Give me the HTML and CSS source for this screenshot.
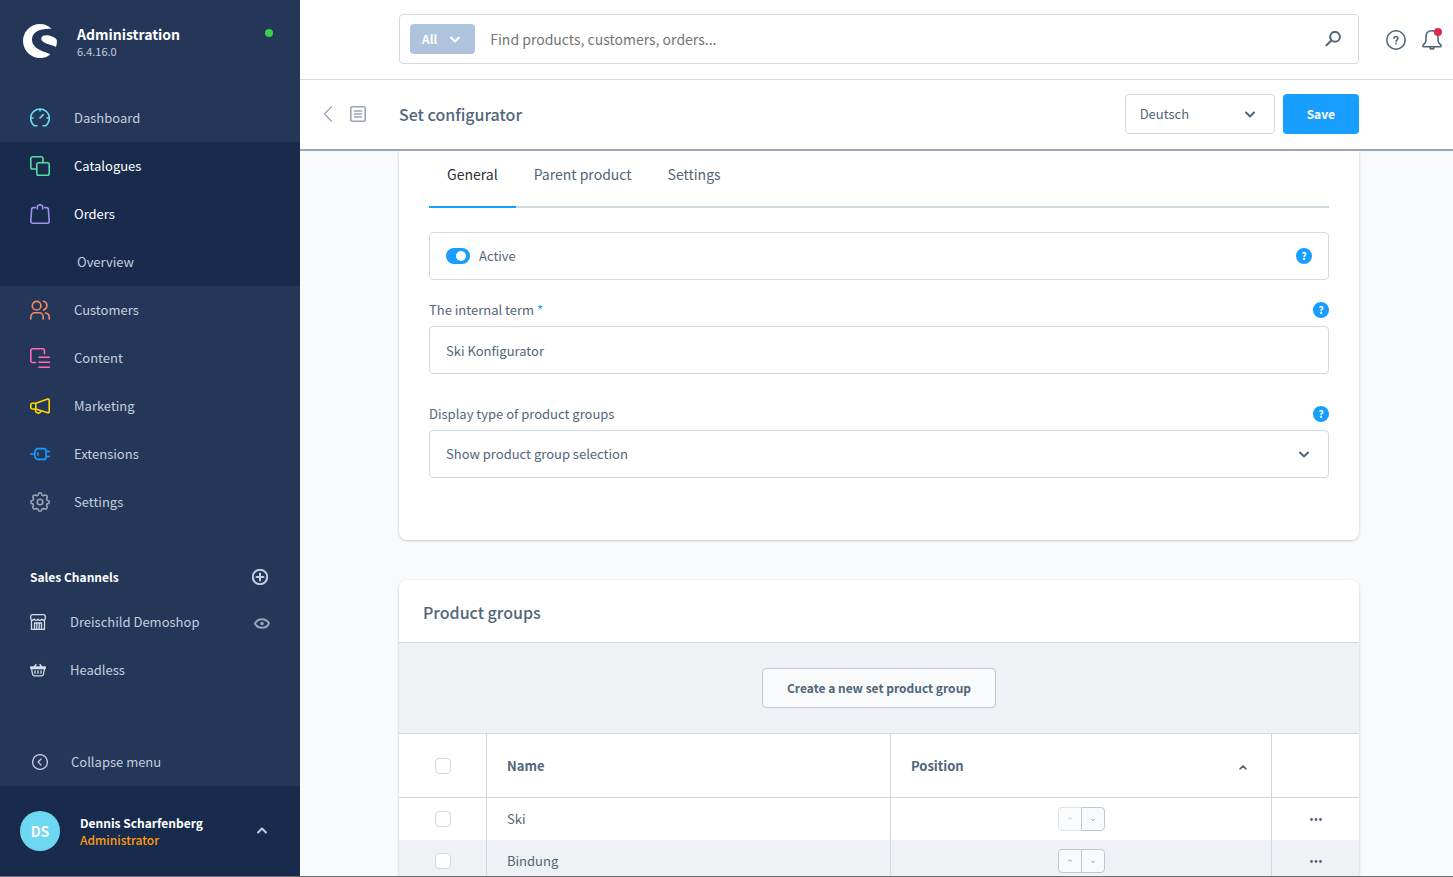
FILE: index.html
```html
<!DOCTYPE html>
<html lang="en">
<head>
<meta charset="utf-8">
<title>Set configurator | Administration</title>
<link rel="stylesheet" href="styles.css">
</head>
<body>
<div class="app">
  <aside class="sidebar">
    <header class="brand">
      <svg class="brand-logo" viewBox="0 0 34 34" aria-hidden="true"><path d="M28.500 4.800C25.500 1.800 21.500 0 17 0a17 17 0 0 0 0 34c4 0 7.500-1.300 10.200-3.600C23 27.500 9 26 9 15.500 9 8 17 4.200 28.500 4.800z"/><path d="M18.200 14.500c0-3 4-4 8-3 4.100 1 7 3 7.600 4.500.3 2.400 0 4.800-.8 7C28.500 20.500 18.200 19.500 18.200 14.500z"/></svg>
      <div class="brand-text">
        <strong class="brand-name">Administration</strong>
        <span class="brand-version">6.4.16.0</span>
      </div>
      <span class="status-dot"></span>
    </header>

    <nav class="menu" aria-label="Main">
      <a class="menu-item" href="#"><svg class="icon cyan" viewBox="0 0 20 20"><path d="M6.800 17.800H4.600a9.300 9.300 0 1 1 10.800 0h-2.200M10 .8v2.200M.8 10H3M17 10h2.200M10 10l3.200-3.400"/></svg>Dashboard</a>
      <div class="menu-open">
        <a class="menu-item active" href="#"><svg class="icon green" viewBox="0 0 20 20"><path d="M6.500 13H2.600A1.800 1.800 0 0 1 .8 11.200V2.600A1.800 1.800 0 0 1 2.600.8h8.600A1.800 1.800 0 0 1 13 2.600v4.200"/><rect x="6.800" y="6.800" width="12.400" height="12.400" rx="1.800"/></svg>Catalogues</a>
        <a class="menu-item active" href="#"><svg class="icon purple" viewBox="0 0 20 20"><path d="M5.200 3.600H3.600A2 2 0 0 0 1.600 5.500L.8 17.200a2 2 0 0 0 2 2h14.400a2 2 0 0 0 2-2l-.8-11.700a2 2 0 0 0-2-1.900h-1.600M7.300 5V3.200c0-3.200 5.400-3.200 5.400 0V5"/></svg>Orders</a>
        <a class="menu-item sub" href="#">Overview</a>
      </div>
      <a class="menu-item" href="#"><svg class="icon coral" viewBox="0 0 20 20"><circle cx="6.600" cy="5.700" r="4.300"/><path d="M.8 19v-2.200a4 4 0 0 1 4-4h4.400a4 4 0 0 1 4 4V19M13.500 1.300c4.500 1 4.500 7.400 0 8.600M15.500 13c2.300.4 3.700 2 3.700 4v2"/></svg>Customers</a>
      <a class="menu-item" href="#"><svg class="icon pink" viewBox="0 0 20 20"><path d="M5.500 14.500H2.600A1.800 1.800 0 0 1 .8 12.700V2.600A1.800 1.800 0 0 1 2.600.8h10A1.800 1.800 0 0 1 14.400 2.600v3M9 9.200h11M9 14.200h11M9 19.200h11"/></svg>Content</a>
      <a class="menu-item" href="#"><svg class="icon yellow" viewBox="0 0 20 20"><path d="M5.800 7.200L17.800 3Q19.200 2.700 19.200 4v11.800q0 1.300-1.400 1L5.800 13H2.400Q.8 13 .8 11.600V8.600Q.8 7.200 2.400 7.200zM5.800 7.200V13M5.600 13c-1.200 4.500 4.400 5.500 5.400 1.800"/></svg>Marketing</a>
      <a class="menu-item" href="#"><svg class="icon blue" viewBox="0 0 20 20"><path d="M0 10h4.800M16 7.500h4M16 12.500h4M8 8.800v2.400M7.500 4.600h6.500q2 0 2 2v6.800q0 2-2 2H7.500Q4.800 14.400 4.800 11.500v-3Q4.800 5.600 7.500 4.600z"/></svg>Extensions</a>
      <a class="menu-item" href="#"><svg class="icon slate" viewBox="0 0 20 20"><circle cx="10" cy="10" r="2.800"/><path d="M8.300 2.400Q8.500.8 10 .8t1.700 1.600l.3.900 1.300.5.900-.5q1.400-.7 2.400.3t.3 2.400l-.4 1 .5 1.200 1 .3q1.300.2 1.300 1.500t-1.300 1.600l-1 .4-.5 1.200.4.900q.7 1.400-.3 2.400t-2.400.3l-.9-.4-1.300.5-.3.900q-.3 1.400-1.700 1.400t-1.700-1.400l-.3-.9-1.300-.5-.9.400q-1.400.7-2.400-.3t-.3-2.400l.4-.9-.5-1.200-1-.4Q.8 11.500.8 10t1.300-1.500l1-.3.5-1.200-.4-1q-.7-1.400.3-2.400t2.400-.3l.9.500L8 3.300z"/></svg>Settings</a>
    </nav>

    <section class="channels">
      <div class="channels-head"><h2 class="channels-title">Sales Channels</h2>
        <button class="icon-btn" type="button" aria-label="Add sales channel"><svg class="icon-s bold" viewBox="0 0 16 16"><circle cx="8" cy="8" r="7.200"/><path d="M8 4.500v7M4.500 8h7"/></svg></button></div>
      <a class="channel" href="#"><svg class="icon-s light" viewBox="0 0 16 16"><path d="M1.500 6.500v9h13v-9M.7 4.500V2.500Q.7.700 2.500.7h11q1.800 0 1.800 1.800v2c-.2 2.200-2.600 2.200-3.600.6-1 1.600-2.700 1.600-3.700 0-1 1.600-2.700 1.600-3.700 0-1 1.600-3.400 1.600-3.600-.6zM4.500 15.500V9h7v6.500M6.800 9v6.500M9.200 9v6.500"/></svg><span class="channel-name">Dreischild Demoshop</span><svg class="icon-s eye" viewBox="0 0 16 16"><path d="M1 9.500c2.800-5.700 11.200-5.700 14 0-2.800 5.700-11.200 5.700-14 0z"/><circle cx="8" cy="9.500" r=".8"/></svg></a>
      <a class="channel" href="#"><svg class="icon-s light" viewBox="0 0 16 16"><path d="M.7 5h14.600v1.500H.7zM1.500 6.500l1 5.500q.2 1.800 1.800 1.800h7.400q1.600 0 1.800-1.800l1-5.500M4.500 4.500L6 2.500M11.500 4.500L10 2.500M5 8.800v2.500M8 8.800v2.500M11 8.800v2.500"/></svg><span class="channel-name">Headless</span></a>
    </section>

    <button class="collapse" type="button"><svg class="icon-s" viewBox="0 0 16 16"><circle cx="8" cy="8" r="7.400"/><path d="M9 5L6.200 8 9 11"/></svg>Collapse menu</button>

    <button class="user" type="button">
      <span class="avatar">DS</span>
      <span class="user-text"><span class="user-name">Dennis Scharfenberg</span><span class="user-role">Administrator</span></span>
      <svg class="chevron" viewBox="0 0 12 12"><path d="M2 7.500l4-4 4 4"/></svg>
    </button>
  </aside>

  <div class="desk">
    <header class="topbar">
      <form class="search">
        <button class="search-scope" type="button">All<svg class="chevron" viewBox="0 0 12 12"><path d="M2 4.500l4 4 4-4"/></svg></button>
        <input class="search-input" type="text" aria-label="Search" placeholder="Find products, customers, orders...">
        <button class="icon-btn" type="button" aria-label="Search"><svg class="icon-s bold" viewBox="0 0 16 16"><circle cx="10" cy="5.800" r="4.900"/><path d="M6.500 9.300L1.500 14.300"/></svg></button>
      </form>
      <div class="topbar-actions">
        <button class="icon-btn" type="button" aria-label="Help"><svg class="icon" viewBox="0 0 20 20"><circle cx="10" cy="10" r="9.200"/><path d="M8 8.300c0-2.500 4-2.500 4 0 0 1.400-2 1.600-2 3.200M10 13.300v.4"/></svg></button>
        <button class="icon-btn bell" type="button" aria-label="Notifications"><svg class="icon" viewBox="0 0 20 20"><path d="M10 .8C6 .8 4 3.600 4 7v3.500c0 3-3.200 3.800-3.200 5.200q0 1.100 1.200 1.100h16q1.200 0 1.200-1.100c0-1.400-3.200-2.200-3.200-5.200V7C16 3.600 14 .8 10 .8zM8 17.200c0 2.400 4 2.400 4 0"/></svg><span class="bell-dot"></span></button>
      </div>
    </header>

    <header class="pagebar">
      <div class="pagebar-nav">
        <button class="icon-btn" type="button" aria-label="Back"><svg class="icon-s" viewBox="0 0 16 16"><path d="M11.500.8L4.500 8l7 7.200"/></svg></button>
        <button class="icon-btn" type="button" aria-label="List"><svg class="icon-s list" viewBox="0 0 16 16"><rect x=".8" y=".8" width="14.400" height="14.400" rx="1.500"/><path d="M4.500 5h7M4.500 8h7M4.500 11h7"/></svg></button>
      </div>
      <div class="pagebar-main">
        <h1 class="page-title">Set configurator</h1>
        <div class="select language"><select class="control" aria-label="Language"><option>Deutsch</option></select><svg class="chevron" viewBox="0 0 12 12"><path d="M2 4.500l4 4 4-4"/></svg></div>
        <button class="save" type="button">Save</button>
      </div>
    </header>

    <main class="content">
      <section class="card general">
        <nav class="tabs"><a class="tab current" href="#">General</a><a class="tab" href="#">Parent product</a><a class="tab" href="#">Settings</a></nav>
        <div class="switch-row">
          <label class="switch-label"><input class="switch" type="checkbox" checked>Active</label>
          <button class="help" type="button" aria-label="Help: Active">?</button>
        </div>
        <div class="field">
          <div class="field-head"><label for="term">The internal term <span class="required">*</span></label><button class="help" type="button" aria-label="Help: The internal term">?</button></div>
          <input class="control" id="term" type="text" value="Ski Konfigurator">
        </div>
        <div class="field">
          <div class="field-head"><label for="display">Display type of product groups</label><button class="help" type="button" aria-label="Help: Display type">?</button></div>
          <div class="select"><select class="control" id="display"><option>Show product group selection</option></select><svg class="chevron" viewBox="0 0 12 12"><path d="M2 4.500l4 4 4-4"/></svg></div>
        </div>
      </section>

      <section class="card groups">
        <h2 class="card-title">Product groups</h2>
        <div class="card-tools"><button class="create" type="button">Create a new set product group</button></div>
        <table class="grid">
          <colgroup><col class="col-check"><col class="col-name"><col class="col-pos"><col class="col-menu"></colgroup>
          <thead>
            <tr><th><input class="check" type="checkbox" aria-label="Select all"></th><th>Name</th><th><span class="sort">Position<svg class="chevron small" viewBox="0 0 12 12"><path d="M2.500 9.500l3.500-3.500 3.500 3.500"/></svg></span></th><th></th></tr>
          </thead>
          <tbody>
            <tr>
              <td><input class="check" type="checkbox" aria-label="Select Ski"></td><td>Ski</td>
              <td><span class="mover"><button class="move" type="button" disabled aria-label="Move up"><svg viewBox="0 0 4 4"><path d="M.5 2L2 1l1.500 1"/></svg></button><button class="move" type="button" aria-label="Move down"><svg viewBox="0 0 4 4"><path d="M.5 2.500L2 3.500l1.500-1"/></svg></button></span></td>
              <td><button class="icon-btn more" type="button" aria-label="Actions"><svg viewBox="0 0 12 4"><circle cx="1.500" cy="2.500" r="1.400"/><circle cx="6" cy="2.500" r="1.400"/><circle cx="10.500" cy="2.500" r="1.400"/></svg></button></td>
            </tr>
            <tr>
              <td><input class="check" type="checkbox" aria-label="Select Bindung"></td><td>Bindung</td>
              <td><span class="mover"><button class="move" type="button" aria-label="Move up"><svg viewBox="0 0 4 4"><path d="M.5 2L2 1l1.500 1"/></svg></button><button class="move" type="button" aria-label="Move down"><svg viewBox="0 0 4 4"><path d="M.5 2.500L2 3.500l1.500-1"/></svg></button></span></td>
              <td><button class="icon-btn more" type="button" aria-label="Actions"><svg viewBox="0 0 12 4"><circle cx="1.500" cy="2.500" r="1.400"/><circle cx="6" cy="2.500" r="1.400"/><circle cx="10.500" cy="2.500" r="1.400"/></svg></button></td>
            </tr>
          </tbody>
        </table>
      </section>
    </main>
  </div>
</div>
</body>
</html>
```
FILE: styles.css
```css
:root {
  --text: #52667a;
  --line: #d1d9e0;
  --blue: #189eff;
  --navy: #243758;
  --navy-dark: #182b4c;
  --pale: #c3cfdf;
}

*, *::before, *::after { box-sizing: border-box; }

body {
  margin: 0;
  color: var(--text);
  background: #f9fafc;
  font-family: "Source Sans Pro", "Noto Sans CJK SC", "Noto Sans", sans-serif;
  font-size: 13px;
  line-height: 20px;
}

button, input, select { font: inherit; color: inherit; }
button { cursor: pointer; }
a { color: inherit; text-decoration: none; }
h1, h2 { margin: 0; }
svg { display: block; flex: none; fill: none; stroke: currentColor; stroke-linecap: round; stroke-linejoin: round; }

.app {
  display: grid;
  grid-template-columns: 300px minmax(0, 1fr);
  height: 100vh;
  overflow: hidden;
  border-bottom: 1px solid #6f6f73;
}

.icon { width: 20px; height: 20px; stroke-width: 1.6; }
.icon-s { width: 16px; height: 16px; stroke-width: 1.3; }
.bold { stroke-width: 2; }
.list { stroke-width: 1.6; }
.chevron { width: 12px; height: 12px; stroke-width: 2; }
.icon-btn { display: flex; padding: 0; border: 0; background: none; }

/* Sidebar */
.sidebar { display: flex; flex-direction: column; min-height: 0; color: var(--pale); background: var(--navy); }
.brand { display: flex; align-items: flex-start; padding: 24px 27px 36px 23px; }
.brand-logo { width: 34px; height: 34px; fill: #fff; stroke: none; }
.brand-text { display: flex; flex-direction: column; flex: 1; padding-left: 20px; }
.brand-name { color: #fff; font-size: 14px; line-height: 20px; }
.brand-version { font-size: 11px; line-height: 14px; }
.status-dot { width: 8px; height: 8px; margin-top: 5px; border-radius: 50%; background: #37d046; }

.menu-item { display: flex; align-items: center; gap: 24px; height: 48px; padding-left: 30px; }
.menu-open { background: var(--navy-dark); }
.menu-item.active { color: #fff; }
.menu-item.sub { padding-left: 77px; }
.cyan { color: #6ed8f2; }
.green { color: #57d9a3; }
.purple { color: #a092f0; }
.coral { color: #f88962; }
.pink { color: #ff68b4; }
.yellow { color: #ffd700; }
.blue { color: var(--blue); }
.slate { color: #98a7b8; }

.channels { padding-top: 36px; }
.channels-head { display: flex; align-items: center; justify-content: space-between; height: 30px; margin-bottom: 6px; padding: 0 32px 0 30px; }
.channels-title { color: #fff; font-size: 12px; line-height: 20px; }
.channel { display: flex; align-items: center; gap: 24px; height: 48px; padding: 0 30px; }
.channel-name { flex: 1; }
.light { color: #d5deea; }
.eye { color: #98a7b8; stroke-width: 2; }

.collapse { display: flex; align-items: center; gap: 23px; height: 48px; margin-top: auto; padding: 0 32px; border: 0; background: none; }
.user { display: flex; align-items: center; gap: 20px; height: 90px; padding: 0 32px 0 20px; border: 0; background: var(--navy-dark); text-align: left; }
.avatar { width: 40px; height: 40px; border-radius: 50%; background: #6ed8f2; color: #fff; font-size: 14px; font-weight: 700; line-height: 40px; text-align: center; }
.user-text { display: flex; flex: 1; flex-direction: column; font-size: 12px; line-height: 17px; }
.user-name { color: #fff; font-weight: 700; }
.user-role { color: #ff9a12; font-weight: 500; }

/* Header bars */
.desk { display: flex; flex-direction: column; min-width: 0; min-height: 0; }
.topbar, .pagebar { display: grid; grid-template-columns: 99px minmax(0, 1fr) 94px; align-items: center; flex: none; background: #fff; }
.topbar { padding: 14px 0 15px; border-bottom: 1px solid var(--line); }
.search { display: flex; grid-column: 2; align-items: center; height: 50px; padding: 0 17px 0 10px; border: 1px solid var(--line); border-radius: 4px; }
.search-scope { display: flex; align-items: center; gap: 12px; height: 30px; padding: 0 14px 0 12px; border: 0; border-radius: 4px; background: #aec4dc; color: #fff; font-size: 12px; font-weight: 700; }
.search-input { flex: 1; min-width: 0; padding: 0 15px; border: 0; outline: 0; background: none; font-size: 14px; }
.search-input::placeholder { color: #757575; }
.topbar-actions { display: flex; gap: 16px; padding: 2px 0 0 27px; }
.bell { position: relative; }
.bell-dot { position: absolute; top: -2px; right: 0; width: 8px; height: 8px; border-radius: 50%; background: #de294c; }

.pagebar { padding: 14px 0 15px; border-bottom: 2px solid #9aa8b5; }
.pagebar-nav { display: flex; gap: 14px; padding-left: 20px; color: #98a7b8; }
.pagebar-main { display: flex; align-items: center; gap: 8px; }
.page-title { flex: 1; font-size: 16px; font-weight: 500; line-height: 24px; }
.save { height: 40px; padding: 0 24px; border: 0; border-radius: 4px; background: var(--blue); color: #fff; font-size: 12px; font-weight: 700; }

/* Form controls */
.control { width: 100%; height: 48px; padding: 0 16px; border: 1px solid var(--line); border-radius: 4px; background: #fff; appearance: none; outline: 0; }
.select { display: grid; align-items: center; }
.select > * { grid-area: 1 / 1; }
.select .chevron { justify-self: end; margin-right: 19px; pointer-events: none; }
.language { width: 150px; }
.language .control { height: 40px; padding: 0 14px; }

/* Cards */
.content { display: flex; flex-direction: column; flex: 1; gap: 40px; min-height: 0; padding: 0 94px 0 99px; overflow: hidden; }
.card { flex: none; border-radius: 8px; background: #fff; box-shadow: 0 1px 3px rgba(0, 0, 0, .2); }
.general { padding: 0 30px 62px; border-radius: 0 0 8px 8px; }
.tabs { display: flex; height: 57px; border-bottom: 2px solid var(--line); font-size: 14px; }
.tab { height: 57px; padding: 13px 18px 0; }
.tab.current { border-bottom: 2px solid var(--blue); color: #2b3137; }
.switch-row { display: flex; align-items: center; justify-content: space-between; height: 48px; margin-top: 24px; padding: 0 16px; border: 1px solid var(--line); border-radius: 4px; }
.switch-label { display: flex; align-items: center; gap: 9px; }
.switch { display: flex; align-items: center; justify-content: flex-end; width: 24px; height: 16px; margin: 0; padding: 0 4px; border-radius: 8px; background: var(--blue); appearance: none; }
.switch::before { content: ""; width: 10px; height: 10px; border-radius: 50%; background: #fff; }
.field { margin-top: 20px; }
.field + .field { margin-top: 30px; }
.field-head { display: flex; align-items: center; justify-content: space-between; padding-bottom: 6px; }
.required { color: var(--blue); }
.help { width: 16px; height: 16px; padding: 0; border: 0; border-radius: 50%; background: var(--blue); color: #fff; font-size: 10px; font-weight: 700; line-height: 16px; }

.card-title { padding: 22px 24px 20px; border-bottom: 1px solid var(--line); font-size: 16px; font-weight: 500; line-height: 20px; }
.groups { border-radius: 8px 8px 0 0; }
.card-tools { display: flex; justify-content: center; padding: 25px 0; border-bottom: 1px solid var(--line); background: #f0f1f5; }
.create { height: 40px; padding: 0 24px; border: 1px solid #bcc8d5; border-radius: 4px; background: #f9fafc; font-size: 12px; font-weight: 700; }

.grid { width: 100%; border-collapse: separate; border-spacing: 0; table-layout: fixed; }
.col-check { width: 88px; }
.col-pos { width: 381px; }
.col-menu { width: 87px; }
.grid th, .grid td { padding: 0 20px; border-right: 1px solid var(--line); text-align: left; }
.grid th { height: 64px; border-bottom: 1px solid var(--line); font-weight: 700; }
.grid td { height: 42px; }
.grid th:last-child, .grid td:last-child { border-right: 0; }
.grid tbody tr:nth-child(even) { background: #f0f1f5; }
.check { display: block; width: 16px; height: 16px; margin: 0 auto; border: 1px solid var(--line); border-radius: 4px; background: #fff; appearance: none; }
.sort { display: flex; align-items: center; justify-content: space-between; padding-right: 3px; }
.small { width: 10px; height: 10px; }
.mover { display: flex; justify-content: center; }
.move { display: flex; align-items: center; justify-content: center; width: 24px; height: 24px; padding: 0; border: 1px solid #bcc8d5; border-radius: 4px 0 0 4px; background: #f9fafc; }
.move + .move { margin-left: -1px; border-radius: 0 4px 4px 0; }
.move:disabled { opacity: .5; }
.move svg { width: 4px; height: 4px; stroke-width: .6; }
.more { margin: 0 auto; }
.more svg { width: 12px; height: 4px; fill: currentColor; stroke: none; }
```
